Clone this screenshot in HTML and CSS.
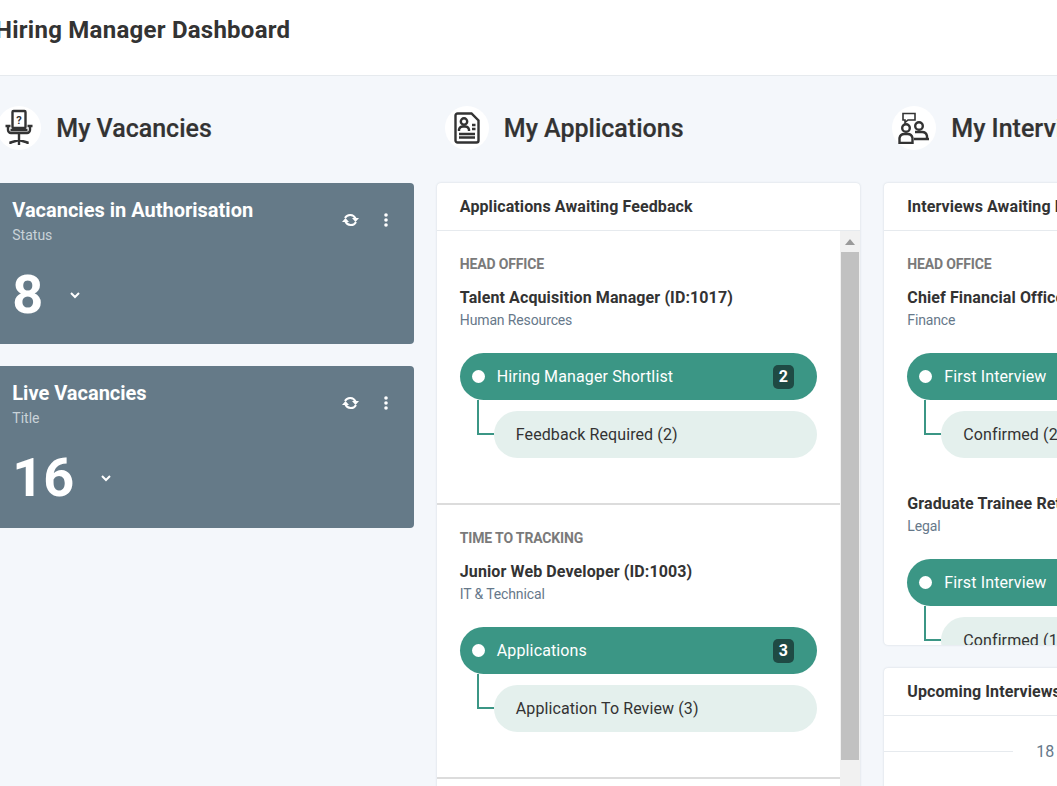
FILE: index.html
```html
<!DOCTYPE html>
<html lang="en">
<head>
    <meta charset="UTF-8">
    <meta name="viewport" content="width=device-width, initial-scale=1.0">
    <title>Hiring Manager Dashboard</title>
    <link rel="stylesheet" href="styles.css">
</head>

<body>
    <div class="page">
        <header class="top-bar">
            <h1>Hiring Manager Dashboard</h1>
        </header>

        <main class="columns">
            <!-- My Vacancies -->
            <section class="column">
                <div class="column-title">
                    <span class="title-icon">
                        <svg width="30" height="38" viewBox="0 0 30 38" fill="none" stroke="#333" stroke-width="2.400">
                            <rect x="8.500" y="2" width="13" height="17" rx="1"/>
                            <text x="15" y="14.500" class="chair-mark">?</text>
                            <path d="M1.500 17h5M23.500 17h5M4 17v4a3 3 0 0 0 3 3h16a3 3 0 0 0 3-3v-4M6.500 21h17M15 24v7M6.500 35v-1.500l8.500-2.500 8.500 2.500V35M15 31v5"/>
                        </svg>
                    </span>
                    <h2>My Vacancies</h2>
                </div>

                <div class="stat-card">
                    <div class="stat-head">
                        <div>
                            <h3>Vacancies in Authorisation</h3>
                            <p>Status</p>
                        </div>
                        <div class="stat-tools">
                            <svg width="19" height="16" viewBox="0 0 18 16" fill="none" stroke="#fff" stroke-width="2"><path d="M3.500 6a5.800 5.800 0 0 1 10.500 0.500M14.500 10a5.800 5.800 0 0 1-10.500-0.500"/><path d="M10.500 6h7l-3.500 4z M0.500 10h7l-3.500-4z" fill="#fff" stroke="none"/></svg>
                            <svg width="4" height="14" viewBox="0 0 4 14" fill="#fff"><circle cx="2" cy="2" r="1.800"/><circle cx="2" cy="7" r="1.800"/><circle cx="2" cy="12" r="1.800"/></svg>
                        </div>
                    </div>
                    <div class="stat-value">
                        <span>8</span>
                        <svg width="10" height="7" viewBox="0 0 10 7" fill="none" stroke="#fff" stroke-width="2"><path d="M1 1l4 4 4-4"/></svg>
                    </div>
                </div>

                <div class="stat-card">
                    <div class="stat-head">
                        <div>
                            <h3>Live Vacancies</h3>
                            <p>Title</p>
                        </div>
                        <div class="stat-tools">
                            <svg width="19" height="16" viewBox="0 0 18 16" fill="none" stroke="#fff" stroke-width="2"><path d="M3.500 6a5.800 5.800 0 0 1 10.500 0.500M14.500 10a5.800 5.800 0 0 1-10.500-0.500"/><path d="M10.500 6h7l-3.500 4z M0.500 10h7l-3.500-4z" fill="#fff" stroke="none"/></svg>
                            <svg width="4" height="14" viewBox="0 0 4 14" fill="#fff"><circle cx="2" cy="2" r="1.800"/><circle cx="2" cy="7" r="1.800"/><circle cx="2" cy="12" r="1.800"/></svg>
                        </div>
                    </div>
                    <div class="stat-value">
                        <span>16</span>
                        <svg width="10" height="7" viewBox="0 0 10 7" fill="none" stroke="#fff" stroke-width="2"><path d="M1 1l4 4 4-4"/></svg>
                    </div>
                </div>
            </section>

            <!-- My Applications -->
            <section class="column">
                <div class="column-title">
                    <span class="title-icon">
                        <svg width="26" height="32" viewBox="0 0 26 32" fill="none" stroke="#333" stroke-width="2.400">
                            <path d="M3.500 1.500h14l7 7v20a2 2 0 0 1-2 2h-19a2 2 0 0 1-2-2v-25a2 2 0 0 1 2-2z"/>
                            <circle cx="10" cy="9.500" r="3.200"/>
                            <path d="M5 19v-1.500a4 4 0 0 1 4-3h2a4 4 0 0 1 4 3V19M18 13h3.500M18 17h3.500M5 22h16M5 25.500h16"/>
                        </svg>
                    </span>
                    <h2>My Applications</h2>
                </div>

                <div class="panel panel-tall">
                    <h4 class="panel-head">Applications Awaiting Feedback</h4>
                    <div class="panel-scroll">
                        <div class="panel-list">
                            <div class="job-group">
                                <div class="office">HEAD OFFICE</div>
                                <div class="job-title">Talent Acquisition Manager (ID:1017)</div>
                                <div class="job-dept">Human Resources</div>
                                <div class="stage">
                                    <span class="stage-dot"></span>
                                    <span class="stage-name">Hiring Manager Shortlist</span>
                                    <span class="stage-count">2</span>
                                </div>
                                <div class="sub-stage">Feedback Required (2)</div>
                            </div>
                            <div class="job-group">
                                <div class="office">TIME TO TRACKING</div>
                                <div class="job-title">Junior Web Developer (ID:1003)</div>
                                <div class="job-dept">IT &amp; Technical</div>
                                <div class="stage">
                                    <span class="stage-dot"></span>
                                    <span class="stage-name">Applications</span>
                                    <span class="stage-count">3</span>
                                </div>
                                <div class="sub-stage">Application To Review (3)</div>
                            </div>
                        </div>
                        <div class="scroll-track">
                            <span class="scroll-arrow"></span>
                            <span class="scroll-thumb"></span>
                        </div>
                    </div>
                </div>
            </section>

            <!-- My Interviews -->
            <section class="column">
                <div class="column-title">
                    <span class="title-icon">
                        <svg width="32" height="32" viewBox="0 0 32 32" fill="none" stroke="#333" stroke-width="2.400">
                            <path d="M5 1.500h12v6.500H10l-3 2.500V8H5z" stroke-width="1.600"/>
                            <circle cx="8" cy="16" r="3.800"/>
                            <circle cx="21" cy="14" r="3.800"/>
                            <path d="M1.500 31v-5a5 5 0 0 1 5-4h3a5 5 0 0 1 5 4v5zM17 20h7a5 5 0 0 1 5 4v3h2M16 27h14"/>
                        </svg>
                    </span>
                    <h2>My Interviews</h2>
                </div>

                <div class="panel panel-short">
                    <h4 class="panel-head">Interviews Awaiting Feedback</h4>
                    <div class="panel-list">
                        <div class="job-group job-group-plain">
                            <div class="office">HEAD OFFICE</div>
                            <div class="job-title">Chief Financial Officer (ID:1009)</div>
                            <div class="job-dept">Finance</div>
                            <div class="stage">
                                <span class="stage-dot"></span>
                                <span class="stage-name">First Interview</span>
                                <span class="stage-count">2</span>
                            </div>
                            <div class="sub-stage">Confirmed (2)</div>
                        </div>
                        <div class="job-group job-group-plain">
                            <div class="job-title">Graduate Trainee Retail (ID:1012)</div>
                            <div class="job-dept">Legal</div>
                            <div class="stage">
                                <span class="stage-dot"></span>
                                <span class="stage-name">First Interview</span>
                                <span class="stage-count">1</span>
                            </div>
                            <div class="sub-stage">Confirmed (1)</div>
                        </div>
                    </div>
                </div>

                <div class="panel panel-upcoming">
                    <h4 class="panel-head">Upcoming Interviews</h4>
                    <div class="date-row">
                        <span class="date-line"></span>
                        <span class="date-text">18</span>
                    </div>
                </div>
            </section>
        </main>
    </div>
</body>
</html>
```

FILE: styles.css
```css
/* General Styles */
html, body {
    margin: 0;
    padding: 0;
    height: 786px;
    overflow: hidden;
}

body {
    font-family: Roboto, "Liberation Sans", sans-serif;
    background-color: #F4F7FB;
    color: #333;
}

/* the window sits a little scrolled to the right */
.page {
    width: 1400px;
    margin-left: -24px;
}

.top-bar {
    height: 75px;
    background-color: #fff;
    border-bottom: 1px solid #E6EAEE;
    display: flex;
    align-items: center;
    padding-left: 19px;
}

.top-bar h1 {
    margin: 0 0 16px;
    font-size: 24px;
    font-weight: 700;
    letter-spacing: 0.250px;
    color: #333;
}

.columns {
    display: flex;
    gap: 24px;
    padding-left: 13.300px;
}

.column {
    width: 423.500px;
    flex: none;
}

.column-title {
    height: 107px;
    display: flex;
    align-items: center;
    padding: 0 0 3px 8px;
    box-sizing: border-box;
}

.column-title h2 {
    margin: 0 0 0 15px;
    font-size: 25px;
    font-weight: 500;
    color: #333;
    -webkit-text-stroke: 0.2px #333;
}

.title-icon {
    width: 44px;
    height: 44px;
    border-radius: 50%;
    background-color: #fff;
    display: flex;
    align-items: center;
    justify-content: center;
    flex: none;
}

.chair-mark {
    font-size: 11px;
    font-weight: 700;
    fill: #333;
    stroke: none;
    text-anchor: middle;
}

/* Vacancy cards */
.stat-card {
    height: 161.250px;
    margin: 0 -1px 22px 0;
    box-sizing: border-box;
    padding: 16px 23px;
    background-color: #657A88;
    border-radius: 4px;
    color: #fff;
}

.stat-head {
    display: flex;
    justify-content: space-between;
}

.stat-head h3 {
    margin: 0;
    font-size: 20px;
    line-height: 22px;
    font-weight: 700;
}

.stat-head p {
    margin: 6px 0 0;
    font-size: 14px;
    line-height: 16px;
    color: #C9D2D8;
}

.stat-tools {
    display: flex;
    align-items: center;
    gap: 24px;
    height: 22px;
    margin-top: 10px;
    padding-right: 3px;
}

.stat-value {
    display: flex;
    align-items: center;
    gap: 27px;
    margin-top: 19px;
    font-size: 54px;
    line-height: 66px;
    font-weight: 700;
}

/* Panels */
.panel {
    background-color: #fff;
    border-radius: 4px;
    box-shadow: 0 0 2px rgba(60, 80, 100, 0.22);
    overflow: hidden;
}

.panel-tall {
    height: 640px;
}

.panel-short {
    height: 462px;
    margin-bottom: 23px;
}

.panel-upcoming {
    height: 200px;
}

.panel-head {
    margin: 0;
    height: 48px;
    box-sizing: border-box;
    padding: 0 23px;
    line-height: 47px;
    font-size: 16px;
    font-weight: 700;
    letter-spacing: 0.100px;
    color: #333;
    border-bottom: 1px solid #E6EAEE;
}

.panel-scroll {
    display: flex;
    height: 592px;
}

.panel-list {
    flex: 1;
    min-width: 0;
}

.job-group {
    height: 274px;
    box-sizing: border-box;
    padding: 25px 23px 0;
    border-bottom: 2px solid #DCDCDC;
}

.job-group-plain {
    height: auto;
    padding-bottom: 0;
    border-bottom: none;
}

.job-group-plain + .job-group-plain {
    padding-top: 36px;
}

.office {
    font-size: 14px;
    line-height: 16px;
    font-weight: 700;
    letter-spacing: -0.150px;
    color: #7A7A7A;
}

.job-title {
    margin-top: 16px;
    font-size: 16px;
    line-height: 19px;
    font-weight: 700;
    letter-spacing: 0.110px;
    color: #333;
}

.job-group-plain + .job-group-plain .job-title {
    margin-top: 0;
}

.job-dept {
    margin-top: 5px;
    font-size: 14px;
    line-height: 16px;
    letter-spacing: -0.130px;
    color: #66788A;
}

/* Stage pills */
.stage {
    display: flex;
    align-items: center;
    width: 357px;
    height: 47px;
    margin-top: 25px;
    box-sizing: border-box;
    padding: 0 23px 0 12px;
    border-radius: 24px;
    background-color: #3B9685;
    color: #fff;
    font-size: 16px;
}

.stage-dot {
    width: 13px;
    height: 13px;
    border-radius: 50%;
    background-color: #fff;
    flex: none;
}

.stage-name {
    flex: 1;
    margin-left: 12px;
    letter-spacing: 0.130px;
}

.stage-count {
    width: 21px;
    height: 24px;
    line-height: 24px;
    border-radius: 5px;
    text-align: center;
    font-weight: 700;
    background-color: #1F4A44;
}

.sub-stage {
    position: relative;
    width: 323px;
    height: 47px;
    margin: 11px 0 0 34px;
    box-sizing: border-box;
    padding-left: 22px;
    border-radius: 24px;
    background-color: #E4F0ED;
    line-height: 47px;
    font-size: 16px;
    letter-spacing: 0.100px;
    color: #333;
}

/* elbow joining the sub stage back to its parent pill */
.sub-stage::before {
    content: "";
    position: absolute;
    left: -17px;
    top: -11px;
    width: 15px;
    height: 33px;
    border-left: 2px solid #3B9685;
    border-bottom: 2px solid #3B9685;
}

/* Scrollbar */
.scroll-track {
    width: 20.500px;
    flex: none;
    background-color: #F1F1F1;
    display: flex;
    flex-direction: column;
    align-items: center;
}

.scroll-arrow {
    margin-top: 8px;
    width: 0;
    height: 0;
    border-left: 5px solid transparent;
    border-right: 5px solid transparent;
    border-bottom: 6px solid #9A9A9A;
}

.scroll-thumb {
    width: 17.500px;
    height: 508px;
    margin-top: 7px;
    background-color: #C1C1C1;
}

/* Upcoming interviews */
.date-row {
    display: flex;
    align-items: center;
    height: 71px;
    gap: 23px;
}

.date-line {
    width: 129px;
    height: 1px;
    background-color: #E6EAEE;
}

.date-text {
    font-size: 16px;
    color: #66788A;
}
```
